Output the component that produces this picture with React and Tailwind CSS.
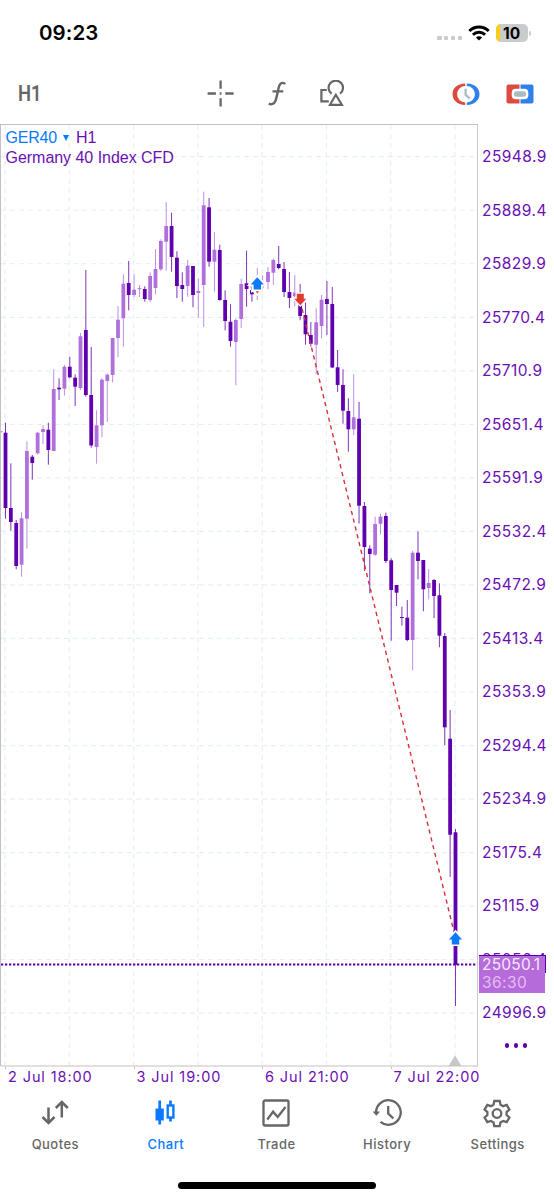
// Mobile trading chart screen
const FIRST_X = 5.5;
const STEP_X = 5.357;

// [high, bodyTop, bodyBottom, low, rising]
const candles = [
  [422.7, 432.7, 508, 518.7, 0],
  [463.3, 508, 522, 530.7, 0],
  [520, 523, 566, 569.3, 0],
  [512.3, 518.3, 564.7, 576.7, 1],
  [441.3, 451, 518.7, 548.7, 1],
  [455, 456.7, 463, 479.7, 0],
  [432, 432.7, 453.3, 454.7, 1],
  [425, 429, 432, 444, 1],
  [422.7, 429.7, 450, 464.7, 0],
  [369.3, 389, 451, 451, 1],
  [378.3, 387.7, 389.3, 400, 0],
  [365, 366.7, 388.7, 395.7, 1],
  [356.7, 366.7, 377.3, 378.3, 0],
  [374.3, 377.7, 386.7, 406, 0],
  [333, 336.3, 388, 390, 1],
  [270, 330, 395, 396.7, 0],
  [347, 395, 445.5, 447.7, 0],
  [410.3, 425.3, 447, 463.7, 1],
  [378.3, 379.7, 425.3, 437.3, 1],
  [373.3, 374.7, 381, 422, 1],
  [338, 338, 375, 382.3, 1],
  [306, 319.7, 338, 357.3, 1],
  [274.3, 283.7, 318.3, 346.7, 1],
  [261, 283, 295, 310.3, 0],
  [274.3, 289.7, 295, 297, 1],
  [285, 288.2, 289.2, 297, 1],
  [286.3, 289, 299, 301.7, 0],
  [272.3, 276, 300, 302, 1],
  [249, 269, 288, 294.3, 1],
  [239.3, 241, 269.3, 271, 1],
  [202, 226, 241.7, 270.7, 1],
  [212.7, 226, 257, 271.7, 0],
  [251.3, 257.7, 286, 298, 0],
  [272.3, 285, 289, 301.7, 0],
  [260, 265.7, 286, 296.7, 1],
  [266, 266, 295, 307.3, 0],
  [278.7, 291, 293, 317.7, 1],
  [191.7, 205.3, 285, 327, 1],
  [198, 207.3, 261.7, 266.7, 0],
  [232, 249.7, 261.7, 291.7, 1],
  [244.7, 250, 300, 300.7, 0],
  [290.3, 300, 321, 330.3, 0],
  [304.3, 321.7, 341, 346.7, 0],
  [318.3, 320, 342, 385.3, 1],
  [278.7, 284, 319, 328, 1],
  [250.7, 283.3, 289, 306.7, 0],
  [286, 290, 294.3, 301.7, 0],
  [268, 284, 291, 300, 1],
  [275.5, 283, 284, 290, 1],
  [267, 272, 282, 289.3, 1],
  [258.7, 260, 272.7, 285, 1],
  [246, 264, 268, 269.3, 0],
  [262, 269, 292, 297, 0],
  [272, 292, 298, 308, 0],
  [275, 292.7, 296.3, 306.3, 1],
  [284, 298, 316, 320.3, 0],
  [302.7, 315, 334.3, 344.7, 0],
  [322, 335, 343.7, 346.7, 0],
  [308.3, 322.3, 344.7, 374, 1],
  [295, 299.7, 326, 338.3, 1],
  [281, 299, 304, 335, 0],
  [287, 304, 367.5, 368, 0],
  [350, 367.3, 385, 392, 0],
  [369.3, 385, 410.7, 423.7, 0],
  [398.3, 411, 429.3, 451.7, 0],
  [374.3, 417.3, 429.3, 435.3, 1],
  [402, 418.7, 505.7, 523.7, 0],
  [502, 506, 547, 571, 0],
  [545.3, 548.7, 554, 593.3, 0],
  [516.7, 524, 554.7, 556, 1],
  [514, 516.7, 523.7, 534.3, 1],
  [512.7, 516, 561, 563, 0],
  [558.3, 560.3, 590, 640.7, 0],
  [585, 585, 592.7, 606, 0],
  [606.7, 617, 618, 625.7, 0],
  [600, 617.7, 640, 641.3, 0],
  [551, 552.7, 640, 670.3, 1],
  [531.3, 552.7, 561, 579.3, 0],
  [560, 560, 589.3, 611.3, 0],
  [569, 583, 588, 599.3, 1],
  [579, 580, 596, 618, 0],
  [583.3, 595.3, 635.7, 647.3, 0],
  [633, 636, 727.3, 745, 0],
  [710, 738.7, 834.7, 877, 0],
  [829, 832.3, 965, 1006, 0],
];

const gridX = [5, 69.3, 133.6, 198, 262.2, 326.5, 390.7, 455];
const rows = Array.from({ length: 17 }, (_, i) => i);
const gridY = rows.map((i) => 156.7 + i * 53.53);
const prices = rows.map((i) => (25948.9 - i * 59.5).toFixed(1));
const times = ['2 Jul 18:00', '3 Jul 19:00', '6 Jul 21:00', '7 Jul 22:00'];

const UpArrow = ({ x, y }) => (
  <path
    transform={`translate(${x} ${y})`}
    d="M0-7 6.6.2H3.7V5.2H-3.7V.2H-6.6Z"
    fill="#0a7aff"
    stroke="#fff"
    strokeWidth="3.4"
    paintOrder="stroke"
  />
);

const CandleChart = () => (
  <svg className="block w-[478px] h-[943px] shrink-0" viewBox="0 124 478 943">
    <g stroke="#e6f1f7" strokeWidth="1.2" strokeDasharray="5 4">
      {gridX.map((x) => (
        <line key={x} x1={x} x2={x} y1="125" y2="1066" />
      ))}
      {gridY.map((y) => (
        <line key={y} x1="1" x2="477" y1={y} y2={y} />
      ))}
    </g>
    <path d="M0 431.8h2.4" stroke="#777" />
    {candles.map(([high, top, bottom, low, rising], i) => {
      const x = FIRST_X + i * STEP_X;
      return (
        <g key={i}>
          <line x1={x} x2={x} y1={high} y2={low} stroke={rising ? '#bd8fe6' : '#7d35ba'} strokeWidth="1" />
          <rect x={x - 1.9} y={top} width="3.8" height={bottom - top} fill={rising ? '#b070dc' : '#5e00ad'} />
        </g>
      );
    })}

    {/* closed and open deals */}
    <path d="M300.2 301 455.5 938" stroke="#d9303a" strokeWidth="1.4" strokeDasharray="4.2 3.8" />
    <path d="M254 291h7l-3.5 3zM250.5 285.5h1.6M262.5 285.5h1.6M251 291h1.3M262.3 291h1.3" fill="#fff" stroke="#fff" strokeWidth="3" />
    <path d="M255.7 291.3h3.4l-1.7 2.2z" fill="#e5392f" />
    <g fill="#e28a8f">
      <rect x="250.4" y="286.3" width="1.2" height="1.2" />
      <rect x="262.7" y="286.3" width="1.2" height="1.2" />
      <rect x="252.4" y="290" width="1.2" height="1.2" />
      <rect x="261.4" y="290" width="1.2" height="1.2" />
    </g>
    <UpArrow x={257.3} y={284.2} />
    <path
      d="M300.3 305.2 294.3 298.8H296.8V293.8H303.8V298.8H306.3Z"
      fill="#e5392f"
      stroke="#fff"
      strokeWidth="2.6"
      paintOrder="stroke"
    />
    <UpArrow x={455.5} y={939.2} />

    <line x1="1" x2="477" y1="964.5" y2="964.5" stroke="#5e00ad" strokeWidth="2" strokeDasharray="2.3 1.7" />
    <path d="M455 1055.5 461.5 1066H448.5Z" fill="#c8c8c8" />
    <path d="M.5 1066V124.5H477.7V1066H.5" fill="none" stroke="#c2c2c4" strokeWidth="1.1" />
    {gridY.map((y) => (
      <path key={y} d={`M477.5 ${y}h2.5`} stroke="#c2c2c4" />
    ))}
  </svg>
);

const PriceAxis = () => (
  <div className="relative flex-1 pt-[6.2px] pl-[4px] text-[15.5px] tracking-[0.45px] text-[#6a10b4]">
    {prices.map((price) => (
      <div key={price} className="flex h-[53.53px] items-center leading-none whitespace-nowrap">
        {price}
      </div>
    ))}
    <div className="mt-[3px] ml-[22.5px] flex gap-[4.6px]">
      <span className="size-[4.6px] rounded-full bg-[#5e00ad]" />
      <span className="size-[4.6px] rounded-full bg-[#5e00ad]" />
      <span className="size-[4.6px] rounded-full bg-[#5e00ad]" />
    </div>
    {/* current price and the time left in this bar */}
    <div className="absolute top-[831px] left-[1px] h-[18px] w-[67px] bg-[#5e00ad]" />
    <div className="absolute top-[832px] left-[1px] h-[37px] w-[66px] bg-[#b66bdb] pl-[3px] leading-[17.5px] text-[#f7e6ff]">
      <div className="tracking-[0.2px]">25050.1</div>
      <div className="text-[#e4bdf5]">36:30</div>
    </div>
  </div>
);

const StatusBar = () => (
  <div className="flex h-[66px] items-center justify-between pr-[23px] pl-[39px]">
    <span className="pt-[1px] text-[20.5px] font-semibold tracking-[0.1px] text-black">09:23</span>
    <div className="flex items-center">
      <div className="mt-[10px] mr-[6px] flex gap-[2.6px]">
        <span className="size-[4.2px] rounded-[1px] bg-[#cbcbcb]" />
        <span className="size-[4.2px] rounded-[1px] bg-[#cbcbcb]" />
        <span className="size-[4.2px] rounded-[1px] bg-[#cbcbcb]" />
        <span className="size-[4.2px] rounded-[1px] bg-[#cbcbcb]" />
      </div>
      <svg className="mr-[6px] h-[16px] w-[22px]" viewBox="0 0 22 16" fill="none" stroke="#000" strokeWidth="2.9">
        <path d="M1.3 6a13.8 13.8 0 0 1 19.4 0" />
        <path d="M4.9 9.8a8.7 8.7 0 0 1 12.2 0" />
        <path d="M11 15.6 7.9 12.5a4.4 4.4 0 0 1 6.2 0z" fill="#000" stroke="none" />
      </svg>
      <div className="flex h-[18px] w-[32px] items-center overflow-hidden rounded-[5px] bg-[#cbcbcb] text-[15.5px] font-bold text-black">
        <span className="mr-[3px] h-full w-[4px] bg-[#f8cd1c]" />
        <span className="pt-[1px] leading-[18px]">10</span>
      </div>
      <span className="ml-[1px] h-[5px] w-[2px] rounded-r-full bg-[#cbcbcb]" />
    </div>
  </div>
);

const Toolbar = () => (
  <div className="flex h-[58px] items-center pb-[3px] pl-[18px]">
    <span className="w-[189px] font-['Roboto'] text-[22.5px] font-semibold text-[#666]">
      <span className="inline-block origin-left scale-x-[0.82]">H1</span>
    </span>
    <svg className="size-[27px]" viewBox="0 0 27 27" fill="none" stroke="#666" strokeWidth="2.3">
      <path d="M13.6.5v8.3M13.6 18.2v8.3M.6 13.5h8.3M18.3 13.5h8.3M12.7 13.5h1.8" />
    </svg>
    <svg className="ml-[33px] h-[27px] w-[21px]" viewBox="0 0 21 27" fill="none" stroke="#666" strokeWidth="2.4">
      <path d="M18.2 4C16.4 2 13.4 2.7 12.3 5.6 11 9 10.2 16.5 8.4 21c-1.2 3-4.2 4-6.6 2.4M5.500 11.400h10.800" />
    </svg>
    <svg className="ml-[31px] size-[27px]" viewBox="0 0 27 27" fill="none" stroke="#666" strokeWidth="2.2">
      <path d="M12.600 13.700a7.200 7.200 0 1 1 8.400 0" />
      <path d="M7.800 10H2.400V21.400H9.800" />
      <path d="M16.800 14.800 22.900 24.800H11Z" />
    </svg>
    <svg className="ml-[105.5px] h-[22px] w-[28px]" viewBox="0 0 28 22">
      <path d="M13.200.6v2.500a8 8 0 0 0 0 16.300v2.500C5 21.600.500 16.800.500 11.200S5 .900 13.200.600z" fill="#dc4a40" />
      <path d="M14.800.6v2.500a8 8 0 0 1 0 16.300v2.500C23 21.600 27.500 16.800 27.500 11.200S23 .900 14.800.600z" fill="#2f80ed" />
      <path d="M13.600 5.800v6l4.200 3.700" fill="none" stroke="#a9bac4" strokeWidth="2.300" />
    </svg>
    <svg className="ml-[26.5px] h-[20px] w-[28px]" viewBox="0 0 28 20">
      <path d="M13.500.5H2.500Q.500.500.500 2.500V17.500Q.500 19.500 2.500 19.500H13.500z" fill="#dc4a40" />
      <path d="M14.500.5H25.500Q27.500.500 27.500 2.500V17.500Q27.500 19.500 25.500 19.500H14.500z" fill="#2f80ed" />
      <rect x="5.700" y="4.700" width="16.600" height="10.600" rx="4" fill="#fff" />
      <rect x="8" y="7.200" width="12" height="5.600" rx="2.800" fill="#a9bac4" />
    </svg>
  </div>
);

const tabs = [
  {
    name: 'Quotes',
    icon: <path d="M8 8.500V23.500M2 18l6 6 6-6M21.300 18.500V3M15.300 9l6-6 6 6" strokeWidth="2.500" />,
  },
  {
    name: 'Chart',
    active: true,
    icon: (
      <>
        <path d="M9.200 1.500V25.500M20 1.500V6M20 19V22.500" strokeWidth="2.700" />
        <rect x="5" y="9.500" width="8.300" height="12" fill="currentColor" stroke="none" />
        <rect x="17.200" y="6.500" width="5.700" height="12" strokeWidth="2.400" />
      </>
    ),
  },
  {
    name: 'Trade',
    icon: (
      <>
        <rect x="2" y="1.500" width="25" height="25" rx="1.500" />
        <path d="M5.800 20.500 11.600 12.700 16.200 18 24 8" />
      </>
    ),
  },
  {
    name: 'History',
    icon: (
      <>
        <path d="M3.700 15A12.300 12.300 0 1 1 8 22.900" />
        <path d="M0 12.500H7.500L3.900 16.800Z" fill="currentColor" stroke="none" />
        <path d="M15.700 7V14.500L20.800 19.300" />
      </>
    ),
  },
  {
    name: 'Settings',
    icon: (
      <>
        <path d="M11.800 2h5.400l.8 3.700 2.600 1.500 3.600-1.200 2.700 4.600-2.800 2.500v2.900l2.800 2.500-2.700 4.600-3.600-1.200-2.600 1.500-.8 3.700h-5.400l-.8-3.700-2.600-1.500-3.600 1.200-2.700-4.600 2.800-2.500v-2.900L2.100 10.600 4.800 6l3.600 1.200L11 5.700z" />
        <circle cx="14.500" cy="14.500" r="4.300" />
      </>
    ),
  },
];

const TabBar = () => (
  <nav className="flex pt-[11px] pr-[1px]">
    {tabs.map((tab) => (
      <div
        key={tab.name}
        className={`flex flex-1 flex-col items-center ${tab.active ? 'text-[#0a7aff]' : 'text-[#666]'}`}
      >
        <svg className="size-[29px]" viewBox="0.5 0 29 29" fill="none" stroke="currentColor" strokeWidth="2.300">
          {tab.icon}
        </svg>
        <span className="mt-[5.500px] text-[13px] leading-[20px] font-medium tracking-[0.45px]">{tab.name}</span>
      </div>
    ))}
  </nav>
);

export default function App() {
  return (
    <div className="flex h-[1199px] w-[554px] flex-col overflow-hidden bg-white font-['Inter',sans-serif]">
      <StatusBar />
      <Toolbar />
      <div className="relative flex">
        <CandleChart />
        <PriceAxis />
        <div className="absolute top-[4px] left-[5.500px] font-['Liberation_Sans',sans-serif] text-[16px] leading-[20px] text-[#6a10b4]">
          <div className="flex items-center">
            <span className="tracking-[-0.2px] text-[#0a7aff]">GER40</span>
            <svg className="mx-[6.500px] h-[6px] w-[6px]" viewBox="0 0 6 6">
              <path d="M0 0h6L3 6z" fill="#0a7aff" />
            </svg>
            H1
          </div>
          <div className="tracking-[-0.03px]">Germany 40 Index CFD</div>
        </div>
      </div>
      <div className="flex h-[21px] pl-[5px] text-[14.500px] leading-[20px] tracking-[0.900px] text-[#6a10b4]">
        {times.map((time) => (
          <div key={time} className="w-[128.500px] shrink-0 whitespace-nowrap">
            <div className="h-[2px] w-px bg-[#c2c2c4]" />
            <div className="-mt-[2px] pl-[3px]">{time}</div>
          </div>
        ))}
      </div>
      <TabBar />
      <div className="mt-auto mb-[10.500px] h-[6.500px] w-[198px] self-center rounded-full bg-black" />
    </div>
  );
}
